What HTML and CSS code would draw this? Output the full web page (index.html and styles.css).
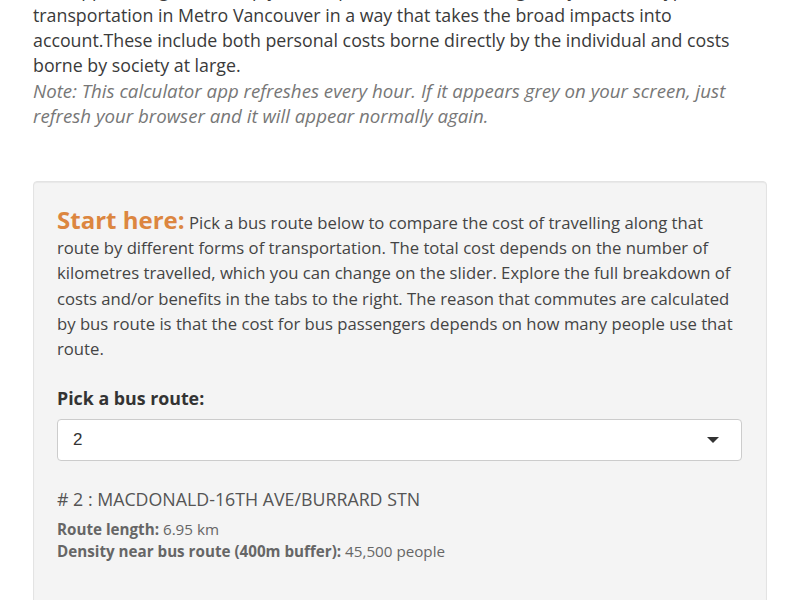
FILE: index.html
```html
<!DOCTYPE html>
<html lang="en">
<head>
<meta charset="utf-8">
<title>Transportation cost calculator</title>
<link rel="stylesheet" href="styles.css">
</head>
<body>
<main class="page">
  <section class="intro">
    <p class="lead">This app is designed to help you compare the costs of using many different types of transportation in Metro Vancouver in a way that takes the broad impacts into account.These include both personal costs borne directly by the individual and costs borne by society at large.</p>
    <p class="note">Note: This calculator app refreshes every hour. If it appears grey on your screen, just refresh your browser and it will appear normally again.</p>
  </section>

  <section class="well">
    <p class="start"><span class="start-label">Start here:</span> Pick a bus route below to compare the cost of travelling along that route by different forms of transportation. The total cost depends on the number of kilometres travelled, which you can change on the slider. Explore the full breakdown of costs and/or benefits in the tabs to the right. The reason that commutes are calculated by bus route is that the cost for bus passengers depends on how many people use that route.</p>

    <div class="field">
      <label class="field-label" for="route">Pick a bus route:</label>
      <div class="select">
        <span class="select-value" id="route">2</span>
        <span class="caret"></span>
      </div>
    </div>

    <div class="route-info">
      <h4 class="route-title"># 2 : MACDONALD-16TH AVE/BURRARD STN</h4>
      <div class="route-meta"><b>Route length:</b> 6.95 km</div>
      <div class="route-meta"><b>Density near bus route (400m buffer):</b> 45,500 people</div>
    </div>
  </section>
</main>
</body>
</html>
```

FILE: styles.css
```css
html, body {
  margin: 0;
  padding: 0;
  background: #ffffff;
}

body {
  font-family: "Open Sans", "Liberation Sans", sans-serif;
  color: #333333;
  overflow: hidden;
}

.page {
  width: 734px;
  margin-left: 33px;
}

.intro {
  margin-top: -22px;
  line-height: 25px;
}

.intro p {
  margin: 0;
}

.lead {
  font-size: 17.8px;
  color: #3a3a3a;
}

.note {
  font-size: 18.7px;
  font-style: italic;
  color: #777777;
}

.well {
  margin-top: 53px;
  background: #f4f4f4;
  border: 1px solid #e3e3e3;
  border-radius: 4px;
  box-shadow: inset 0 1px 1px rgba(0, 0, 0, 0.05);
  padding: 28px 24px 60px 23px;
  min-height: 500px;
}

.start {
  margin: 0;
  font-size: 16.7px;
  line-height: 25.2px;
  color: #444444;
}

.start-label {
  font-size: 24px;
  line-height: 20px;
  font-weight: 700;
  color: #dc8640;
}

.field {
  margin-top: 25px;
}

.field-label {
  display: block;
  font-size: 17.8px;
  line-height: 25px;
  font-weight: 700;
  color: #333333;
  margin-bottom: 8px;
}

.select {
  display: flex;
  align-items: center;
  justify-content: space-between;
  height: 40px;
  background: #ffffff;
  border: 1px solid #cccccc;
  border-radius: 4px;
  padding: 0 22px 0 15px;
}

.select-value {
  font-family: "Liberation Sans", Arial, sans-serif;
  font-size: 17px;
  color: #333333;
}

.caret {
  width: 0;
  height: 0;
  border-left: 6px solid transparent;
  border-right: 6px solid transparent;
  border-top: 6px solid #333333;
}

.route-info {
  margin-top: 26px;
}

.route-title {
  margin: 0 0 7px;
  font-size: 17.8px;
  font-weight: 400;
  color: #555555;
  line-height: 24px;
}

.route-meta {
  font-size: 15.2px;
  line-height: 22px;
  color: #666666;
}
```
